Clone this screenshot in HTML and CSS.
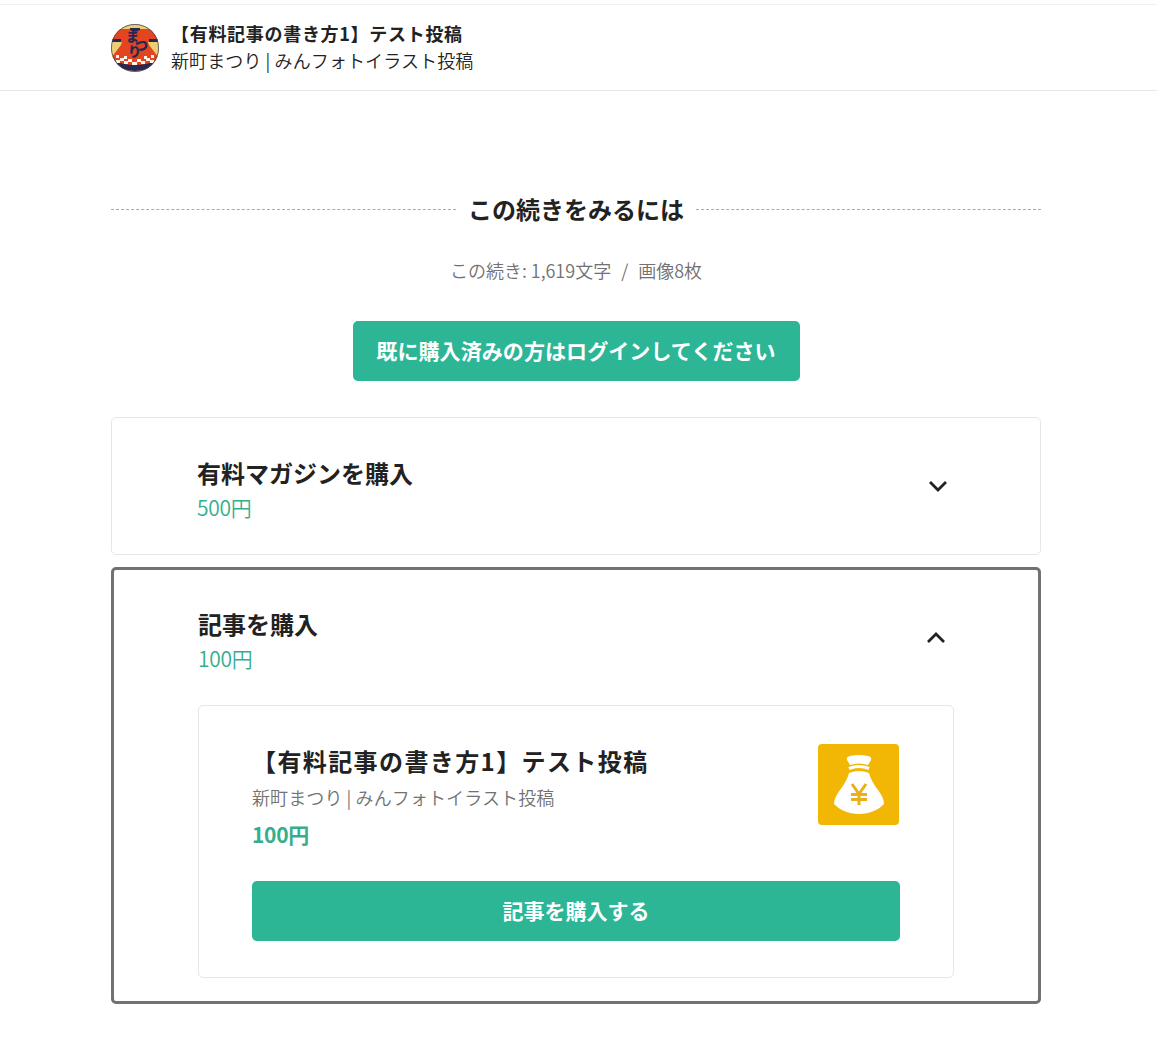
FILE: index.html
```html
<!DOCTYPE html>
<html lang="ja">
<head>
<meta charset="utf-8">
<title>【有料記事の書き方1】テスト投稿</title>
<link rel="stylesheet" href="styles.css">
</head>
<body>
<header class="header">
  <svg class="avatar" viewBox="0 0 48 48" aria-hidden="true">
    <defs><clipPath id="round"><circle cx="24" cy="24" r="24"/></clipPath></defs>
    <g clip-path="url(#round)">
      <rect width="48" height="48" fill="#ecce73"/>
      <path d="M0 5H19L24 8L29 5H48V18H37L38 21L48 34V38Q24 48 0 38V34L10 21L11 18H0Z" fill="#e2451f"/>
      <path d="M19 4H29V6L24 8L19 6ZM0 15H10V18H0ZM38 15H48V18H38Z" fill="#252755"/>
      <path d="M0 36Q24 46 48 36V40Q36 47 24 47Q12 47 0 40Z" fill="#252755"/>
      <path d="M5 31h3v3H5zM9 34h4v3H9zM5 36h4v3H5zM13 32h3v3h-3zM13 37h4v3h-4zM17 35h4v3h-4zM21 38h5v3h-5zM26 35h4v3h-4zM30 37h4v3h-4zM33 32h3v3h-3zM35 34h4v3h-4zM39 36h4v3h-4zM40 31h3v3h-3z" fill="#fff4e7"/>
      <text class="avatar-text" x="15 24 17" y="17 26 32">まつり</text>
    </g>
    <circle cx="24" cy="24" r="23.6" fill="none" stroke="#50445b" stroke-width=".8"/>
  </svg>
  <div class="header-text">
    <div class="header-title">【有料記事の書き方1】テスト投稿</div>
    <div class="creator">新町まつり | みんフォトイラスト投稿</div>
  </div>
</header>
<main class="main">
  <h2 class="divider"><span>この続きをみるには</span></h2>
  <p class="summary"><span>この続き: 1,619文字</span><span>/</span><span>画像8枚</span></p>
  <button class="button login">既に購入済みの方はログインしてください</button>
  <section class="option">
    <div class="option-head">
      <div><h3>有料マガジンを購入</h3><div class="price">500円</div></div>
      <svg class="chevron" viewBox="0 0 20 12"><path d="M2 2L10 10L18 2"/></svg>
    </div>
  </section>
  <section class="option selected">
    <div class="option-head">
      <div><h3>記事を購入</h3><div class="price">100円</div></div>
      <svg class="chevron" viewBox="0 0 20 12"><path d="M2 10L10 2L18 10"/></svg>
    </div>
    <article class="product">
      <div class="product-info">
        <div>
          <h3 class="product-title">【有料記事の書き方1】テスト投稿</h3>
          <div class="creator muted">新町まつり | みんフォトイラスト投稿</div>
          <div class="price strong">100円</div>
        </div>
        <svg class="thumbnail" viewBox="0 0 81 81" aria-hidden="true">
          <rect width="81" height="81" rx="4" fill="#f2b705"/>
          <path d="M29 16Q28 13 32 12Q41 10 50 12Q54 13 53 16L50 21Q41 18 32 21Z" fill="#fff"/>
          <path d="M31 24.500Q41 20.500 51 24.500" fill="none" stroke="#fff" stroke-width="3"/>
          <path d="M31 29Q41 25 51 29Q53 37 60 46Q66 54 66 60Q62 64 58 66Q50 70 41 70Q32 70 24 66Q20 64 16 60Q16 54 22 46Q29 37 31 29Z" fill="#fff"/>
          <path d="M34 40L41 50L48 40M41 50V61M33 50.500H49M33 55.500H49" fill="none" stroke="#eab018" stroke-width="3"/>
        </svg>
      </div>
      <button class="button buy">記事を購入する</button>
    </article>
  </section>
</main>
</body>
</html>
```
FILE: styles.css
```css
* { box-sizing: border-box; }
body {
  margin: 0;
  padding-top: 4px;
  background: #fff;
  color: #222;
  font-family: "Noto Sans CJK JP", sans-serif;
}
h2, h3, p { margin: 0; }
.header {
  display: flex;
  align-items: center;
  gap: 12px;
  height: 87px;
  padding: 0 111px;
  border-top: 1px solid #f1f1f1;
  border-bottom: 1px solid #e8e8e8;
}
.avatar { width: 48px; height: 48px; }
.avatar-text { fill: #252755; font-size: 13px; font-weight: 900; }
.header-text { padding-bottom: 2px; }
.header-title {
  font-size: 18px;
  font-weight: 700;
  line-height: 27px;
  letter-spacing: .7px;
}
.creator {
  font-size: 18px;
  font-weight: 350;
  line-height: 27px;
  letter-spacing: .1px;
  white-space: nowrap;
}
.main {
  display: flex;
  flex-direction: column;
  width: 930px;
  margin-left: 111px;
  padding-top: 100px;
}
.divider {
  display: flex;
  align-items: center;
  gap: 12px;
  font-size: 24px;
  line-height: 36px;
}
.divider::before, .divider::after {
  content: "";
  flex: 1;
  border-top: 1px dashed #aaa;
}
.summary {
  display: flex;
  justify-content: center;
  gap: 10px;
  margin-top: 30px;
  font-size: 18px;
  font-weight: 350;
  line-height: 27px;
  color: #717171;
}
.button {
  height: 60px;
  padding: 0 0 1px;
  border: 0;
  border-radius: 5px;
  background: #2cb696;
  color: #fff;
  font: 700 21px/30px "Noto Sans CJK JP", sans-serif;
}
.login { align-self: center; width: 447px; margin: 37px 0 36px; padding-bottom: 2px; letter-spacing: .08px; }
.option {
  height: 138px;
  border: 1px solid #e6e6e6;
  border-radius: 5px;
  padding: 37px 85px 0;
}
.option-head {
  display: flex;
  justify-content: space-between;
  align-items: flex-start;
}
.option h3 { font-size: 24px; line-height: 36px; }
.price {
  font-size: 21px;
  font-weight: 350;
  line-height: 33px;
  letter-spacing: -.3px;
  color: #35ae8e;
}
.chevron {
  width: 20px;
  height: 12px;
  margin: 25px 7px 0 0;
  fill: none;
  stroke: #222;
  stroke-width: 2.8;
}
.selected {
  height: 437px;
  margin-top: 12px;
  padding: 36px 84px 0;
  border: 3px solid #707371;
}
.selected .chevron { margin: 26px 8px 0 0; }
.product {
  height: 273px;
  margin-top: 30px;
  padding: 37px 53px 0;
  border: 1px solid #e6e6e6;
  border-radius: 5px;
}
.product-info { display: flex; justify-content: space-between; }
.option .product-title { letter-spacing: 1.4px; white-space: nowrap; }
.muted { line-height: 37px; color: #717171; }
.strong { font-weight: 700; line-height: 37px; }
.thumbnail { width: 81px; height: 81px; margin: 1px 1px 0 0; }
.buy { width: 648px; margin-top: 28px; padding-bottom: 2px; }
```
